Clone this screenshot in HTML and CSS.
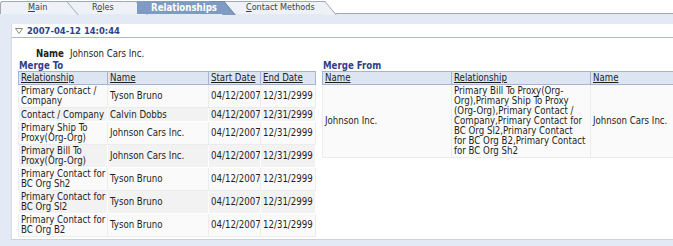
FILE: index.html
```html
<!DOCTYPE html>
<html>
<head>
<meta charset="utf-8">
<link rel="stylesheet" href="styles.css">
</head>
<body>
<div class="tabbar">
  <div class="tab tab-main"><span class="lbl"><u>M</u>ain</span></div>
  <div class="tab tab-roles"><span class="lbl">R<u>o</u>les</span></div>
  <div class="tab tab-rel sel"><span class="lbl">Relationships</span></div>
  <div class="tab tab-cm"><span class="lbl"><u>C</u>ontact Methods</span></div>
</div>
<div class="panel">
  <div class="ph">
    <svg class="tri" width="8" height="6" viewBox="0 0 8 6"><polygon points="0.5,0.5 7.5,0.5 4,5.5" fill="none" stroke="#8a8a78" stroke-width="1"/></svg>
    <span class="ph-title">2007-04-12 14:0:44</span>
  </div>
  <div class="namerow"><span class="nlabel">Name</span><span class="nval">Johnson Cars Inc.</span></div>
  <div class="grids">
    <section class="gl">
      <div class="cap">Merge To</div>
      <table class="tbl tl">
        <colgroup><col class="w-rel"><col class="w-name"><col class="w-sd"><col class="w-ed"></colgroup>
        <tr class="hd"><th><u>Relationship</u></th><th><u>Name</u></th><th><u>Start Date</u></th><th><u>End Date</u></th></tr>
        <tr class="odd"><td>Primary Contact /<br>Company</td><td>Tyson Bruno</td><td>04/12/2007</td><td>12/31/2999</td></tr>
        <tr class="even"><td>Contact / Company</td><td>Calvin Dobbs</td><td>04/12/2007</td><td>12/31/2999</td></tr>
        <tr class="odd"><td>Primary Ship To<br>Proxy(Org-Org)</td><td>Johnson Cars Inc.</td><td>04/12/2007</td><td>12/31/2999</td></tr>
        <tr class="even"><td>Primary Bill To<br>Proxy(Org-Org)</td><td>Johnson Cars Inc.</td><td>04/12/2007</td><td>12/31/2999</td></tr>
        <tr class="odd"><td>Primary Contact for<br>BC Org Sh2</td><td>Tyson Bruno</td><td>04/12/2007</td><td>12/31/2999</td></tr>
        <tr class="even"><td>Primary Contact for<br>BC Org Sl2</td><td>Tyson Bruno</td><td>04/12/2007</td><td>12/31/2999</td></tr>
        <tr class="odd"><td>Primary Contact for<br>BC Org B2</td><td>Tyson Bruno</td><td>04/12/2007</td><td>12/31/2999</td></tr>
      </table>
    </section>
    <section class="gr">
      <div class="cap">Merge From</div>
      <table class="tbl tr">
        <colgroup><col class="w-fn"><col class="w-frel"><col class="w-fn2"></colgroup>
        <tr class="hd"><th><u>Name</u></th><th><u>Relationship</u></th><th><u>Name</u></th></tr>
        <tr class="odd"><td>Johnson Inc.</td><td>Primary Bill To Proxy(Org-<br>Org),Primary Ship To Proxy<br>(Org-Org),Primary Contact /<br>Company,Primary Contact for<br>BC Org Sl2,Primary Contact<br>for BC Org B2,Primary Contact<br>for BC Org Sh2</td><td>Johnson Cars Inc.</td></tr>
      </table>
    </section>
  </div>
</div>
</body>
</html>
```
FILE: styles.css
```css
* { box-sizing: border-box; }
html, body { margin: 0; padding: 0; }
body {
  width: 673px;
  height: 246px;
  overflow: hidden;
  background: #e3eaf5;
  font-family: "DejaVu Sans Condensed", "Liberation Sans", sans-serif;
  font-size: 9.6px;
  color: #1e1e1e;
}
.tabbar {
  display: flex;
  height: 14px;
  background: #ffffff;
  border-bottom: 1px solid #a2a9b4;
  padding-top: 1px;
}
.tab {
  position: relative;
  height: 13px;
  background: #eef1f6;
  border-top: 1px solid #a2a9b4;
  color: #404040;
  line-height: 11px;
  font-size: 9px;
  white-space: nowrap;
}
.tab::after {
  content: "";
  position: absolute;
  top: -1px;
  left: calc(100% - 12px);
  width: 12px;
  height: 13px;
  background: inherit;
  border-top: 1px solid #a2a9b4;
  border-right: 1px solid #a2a9b4;
  transform-origin: 0 0;
  transform: skewX(40deg);
}
.tab .lbl { position: relative; z-index: 1; }
.tab-main { width: 66px; padding-left: 27px; z-index: 4; border-left: 1px solid #a2a9b4; border-top-left-radius: 3px; }
.tab-roles { width: 69px; padding-left: 26px; z-index: 3; }
.tab-rel { width: 86px; padding-left: 14px; z-index: 5; margin-left: 2px; }
.tab-cm { width: 101px; padding-left: 23px; z-index: 2; }
.tab.sel {
  background: #7f9bc4;
  border-top-color: #7f9bc4;
  color: #ffffff;
  font-weight: bold;
  font-size: 9.6px;
}
.tab.sel::after { border-color: #6e89b0; }
.tab.sel::before {
  content: "";
  position: absolute;
  top: -1px;
  left: 0;
  width: 6px;
  height: 13px;
  background: #7f9bc4;
  transform-origin: 0 100%;
  transform: skewX(-20deg);
}

.panel {
  margin: 10px 0 0 11px;
  height: 216px;
  background: #ffffff;
  border-left: 1px solid #d3dbe7;
  border-bottom: 1px solid #c9d2df;
}
.ph {
  display: flex;
  align-items: center;
  height: 14px;
  border-bottom: 1px solid #a9b9d3;
  padding-left: 3px;
}
.tri { display: block; margin-right: 4px; }
.ph-title {
  font-weight: bold;
  color: #2f3f88;
  font-size: 9.4px;
}
.namerow {
  display: flex;
  align-items: center;
  height: 11px;
  margin-top: 10px;
  padding-left: 24px;
}
.nlabel { font-weight: bold; margin-right: 6px; }
.grids {
  display: flex;
  gap: 6px;
  padding-left: 6px;
  margin-top: 1px;
}
.cap {
  height: 11px;
  line-height: 11px;
  font-weight: bold;
  color: #2f3f88;
  padding-left: 1px;
}
.tbl {
  border-collapse: collapse;
  table-layout: fixed;
}
.tl { width: 297px; border-bottom: 1px solid #c5cfde; }
.tr { width: 380px; border-bottom: 1px solid #c5cfde; }
.tbl th, .tbl td {
  padding: 1px 2px;
  line-height: 10px;
  text-align: left;
  vertical-align: middle;
  white-space: nowrap;
  overflow: hidden;
}
.tbl th {
  font-weight: normal;
  height: 13px;
  padding-top: 0;
  padding-bottom: 0;
  background: #dce5f1;
  border: 1px solid #a3b5d3;
  color: #1e1e1e;
}
.tbl td {
  height: 14px;
  border: 1px solid #ffffff;
}
.tbl tr.odd td { background: #fbfafa; border-color: #ececec; }
.tbl tr.even td { background: #f2f2f2; border-color: #ffffff; }
.w-rel { width: 89px; }
.w-name { width: 101px; }
.w-sd { width: 52px; }
.w-ed { width: 55px; }
.w-fn { width: 129px; }
.w-frel { width: 139px; }
.w-fn2 { width: 112px; }
```
